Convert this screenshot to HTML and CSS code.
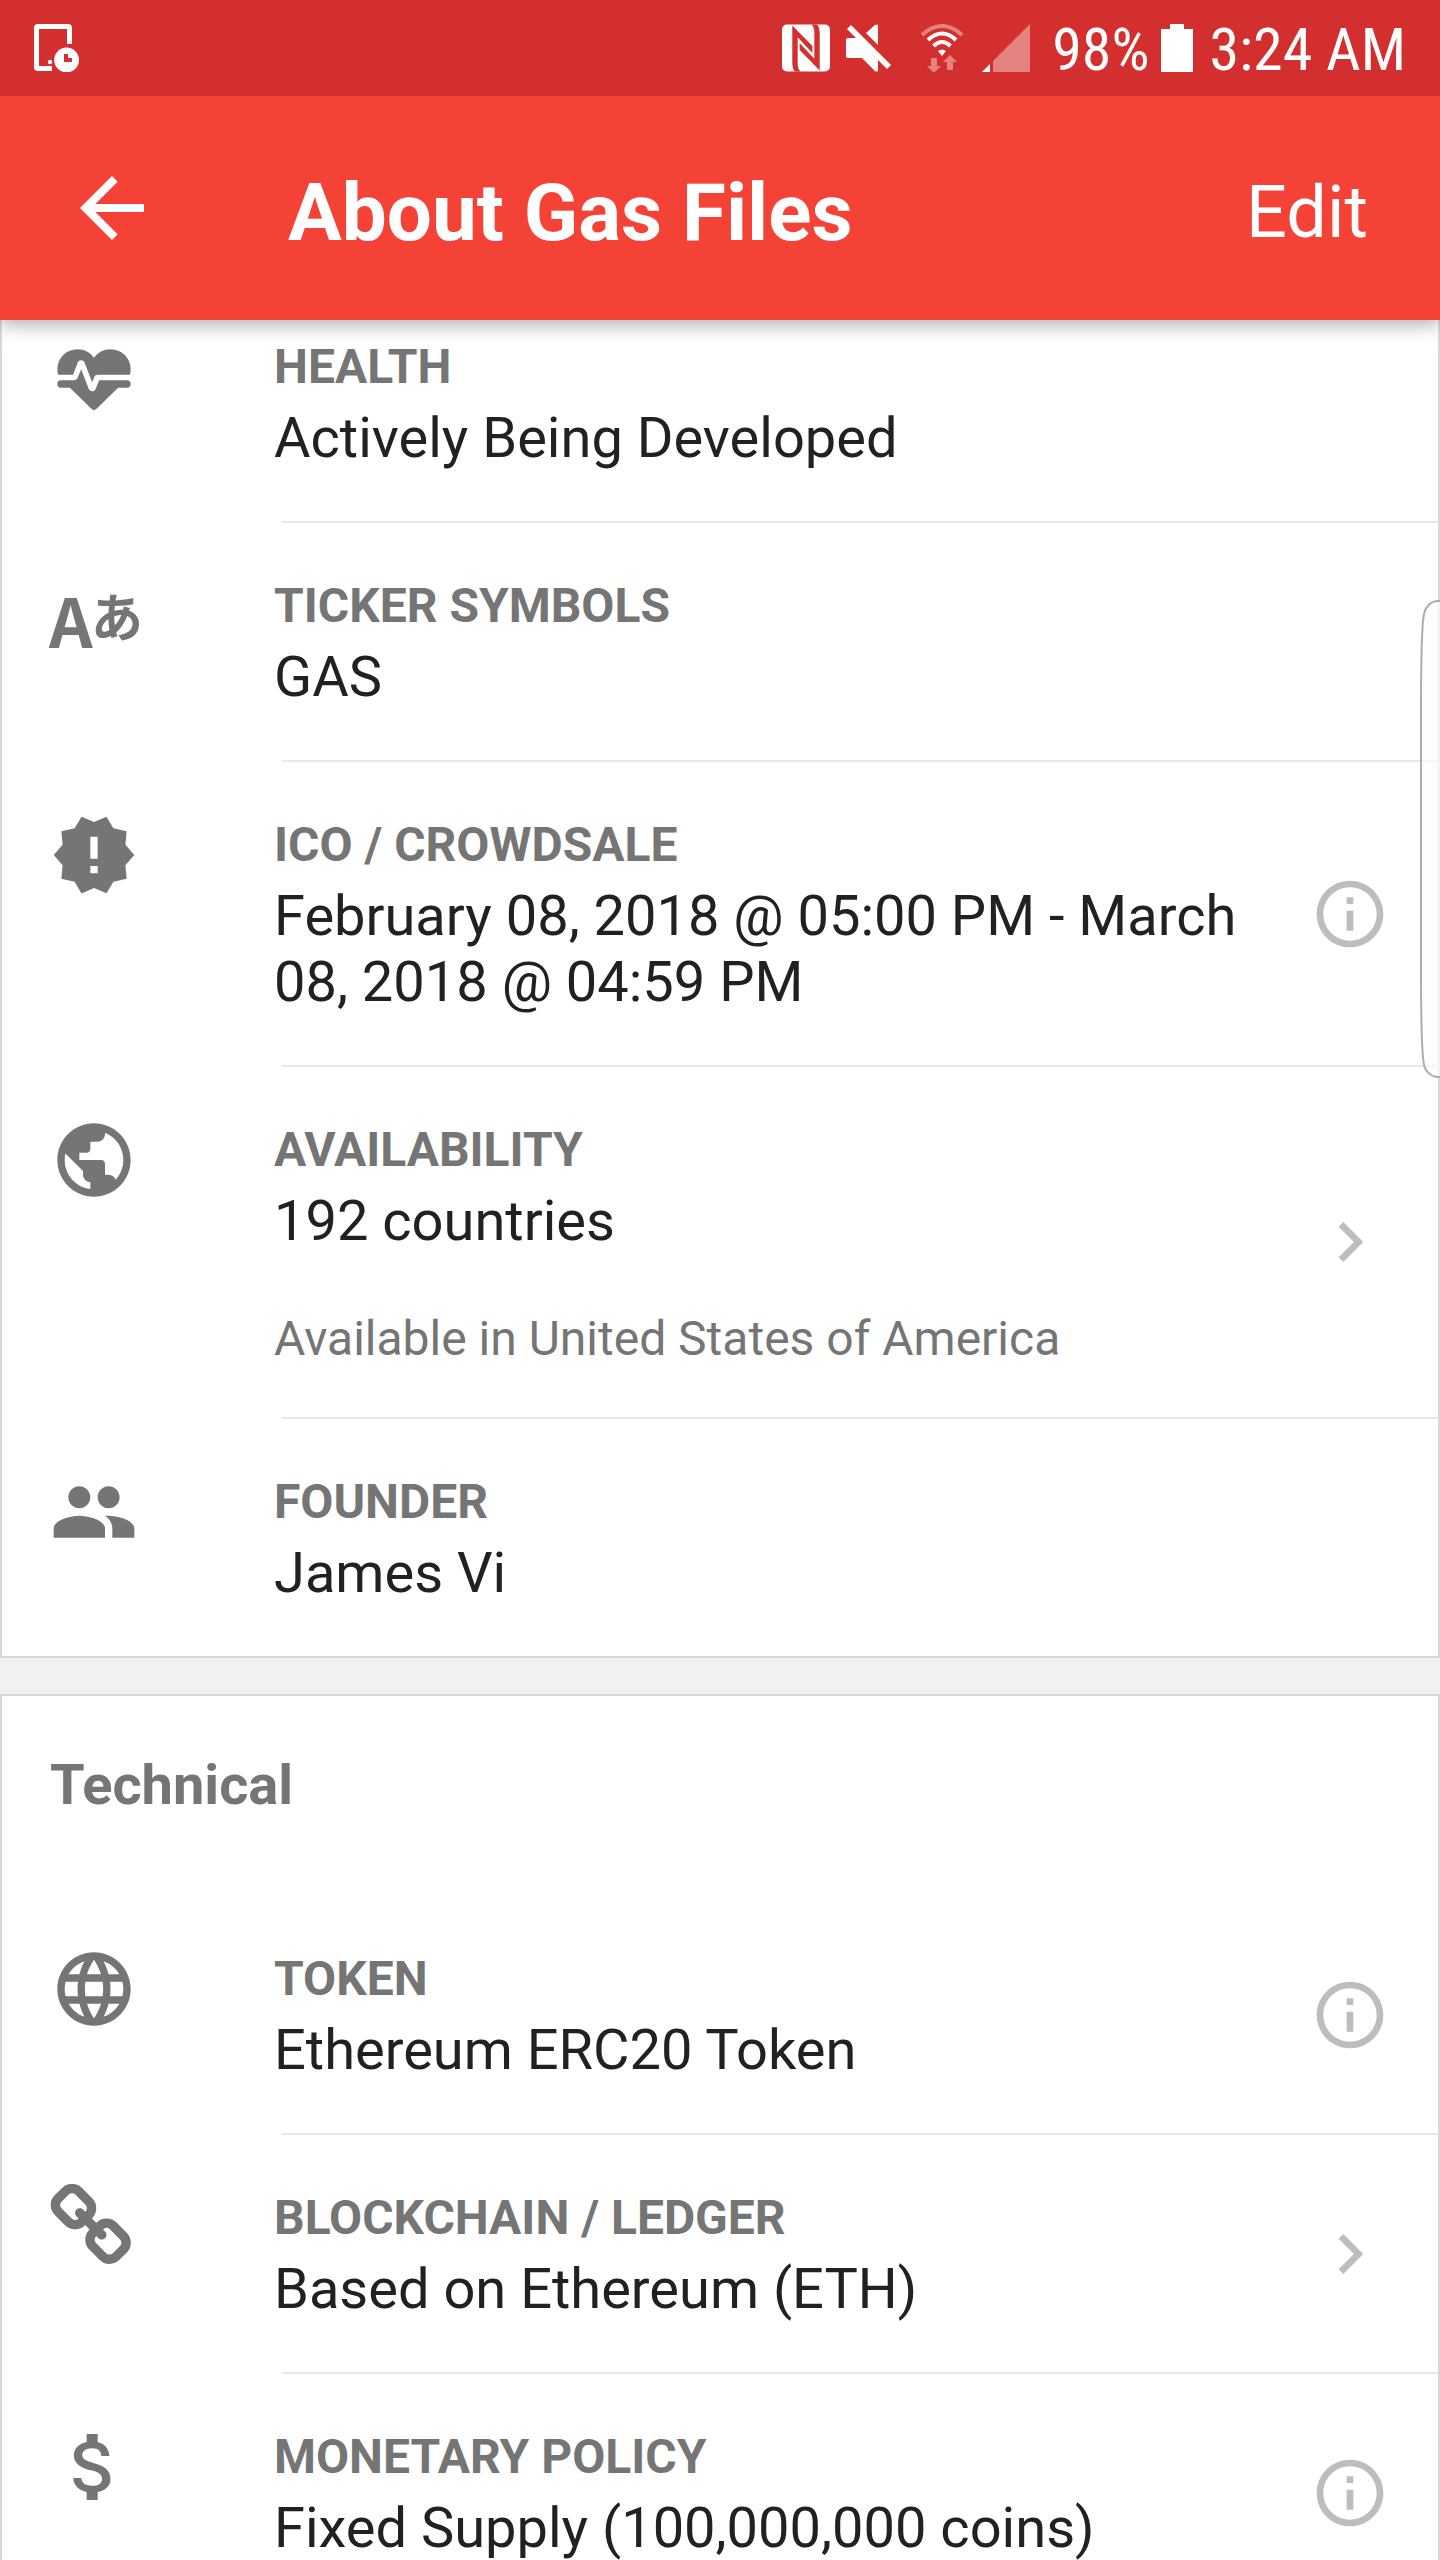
FILE: index.html
```html
<!DOCTYPE html>
<html lang="en">
<head>
<meta charset="utf-8">
<meta name="viewport" content="width=device-width, initial-scale=1">
<title>About Gas Files</title>
<link rel="stylesheet" href="styles.css">
</head>
<body>
<div class="status-bar">
  <svg class="status-icon" viewBox="0 0 48 48" aria-hidden="true">
    <path d="M20 44.500H6a1.500 1.500 0 0 1-1.500-1.500V4A1.500 1.500 0 0 1 6 2.500h30A1.500 1.500 0 0 1 37.500 4v16" fill="none" stroke="#fff" stroke-width="5"/>
    <circle cx="18" cy="38" r="2.200" fill="#fff"/>
    <circle cx="34.600" cy="36" r="12.400" fill="#fff"/>
    <path d="M34 30v6h6" fill="none" stroke="#d32f2f" stroke-width="4"/>
  </svg>
  <div class="status-right">
    <svg class="status-icon" viewBox="0 0 49 48" aria-hidden="true">
      <rect width="49" height="48" rx="5" fill="#fff"/>
      <path d="M10.500 1L31 22V29L16 13V40Q16 46 19 48H13Q10.500 45 10.500 38Z" fill="#d32f2f"/>
      <path d="M38.500 47L18 26V19L33 35V8Q33 2 30 0H36Q38.500 3 38.500 10Z" fill="#d32f2f"/>
    </svg>
    <svg class="status-icon" viewBox="0 0 48 48" aria-hidden="true">
      <g fill="#fff">
        <path d="M5 1l40 40-4 4L1 5z"/>
        <path d="M32 1v20L20 9 29 1q2-1 3 0z"/>
        <path d="M2 14h9l21 22v11q-2 1-3 0L16 34H2q-2 0-2-2V16q0-2 2-2z"/>
      </g>
    </svg>
    <svg class="status-icon status-icon--wifi" viewBox="0 0 48 48" aria-hidden="true">
      <g fill="none" stroke="#fff" stroke-width="4">
        <path d="M4 11q20-18 40 0" opacity=".4"/>
        <path d="M10 16q14-13 28 0"/>
        <path d="M15.500 22q8.500-8 17 0"/>
      </g>
      <path d="M20 27q4-3 8 0l-4 5z" fill="#fff"/>
      <path d="M13 34h6v8h4l-7 7-7-7h4zM29 46h6v-8h4l-7-7-7 7h4z" fill="#fff" opacity=".4"/>
    </svg>
    <svg class="status-icon status-icon--signal" viewBox="0 0 48 48" aria-hidden="true">
      <path d="M48 0v48H11V37z" fill="#fff" opacity=".4"/>
      <path d="M8 40v8H0z" fill="#fff"/>
    </svg>
    <span class="status-text status-text--charge">98%</span>
    <svg class="battery" viewBox="0 0 32 48" aria-hidden="true"><path d="M9 0h14v5h9v43H0V5h9z" fill="#fff"/></svg>
    <span class="status-text">3:24 AM</span>
  </div>
</div>

<header class="app-bar">
  <button class="back" type="button" aria-label="Back">
    <svg viewBox="0 0 24 24" aria-hidden="true"><path d="M20 11H7.830l5.590-5.590L12 4l-8 8 8 8 1.410-1.410L7.830 13H20v-2z"/></svg>
  </button>
  <h1 class="app-title">About Gas Files</h1>
  <button class="edit" type="button">Edit</button>
</header>

<main class="content">
  <section class="card card--first">
    <div class="row">
      <svg class="icon" viewBox="0 -0.4 24 24" aria-hidden="true"><path d="M7.500,4A5.500,5.500 0 0,0 2,9.500C2,10 2.090,10.500 2.220,11H6.300L7.570,7.630C7.870,6.830 9.050,6.750 9.430,7.630L11.500,13L12.090,11.580C12.220,11.250 12.570,11 13,11H21.780C21.910,10.500 22,10 22,9.500A5.500,5.500 0 0,0 16.500,4C14.640,4 13,4.930 12,6.340C11,4.930 9.360,4 7.500,4V4M3,12.500A1,1 0 0,0 2,13.500A1,1 0 0,0 3,14.500H5.440L11,20C12,20.900 12,20.900 13,20L18.560,14.500H21A1,1 0 0,0 22,13.500A1,1 0 0,0 21,12.500H13.400L12.470,14.800C12.070,15.810 10.920,15.670 10.550,14.830L8.500,9.500L7.540,11.830C7.390,12.210 7.050,12.500 6.600,12.500H3Z"/></svg>
      <div class="text">
        <h2 class="label">HEALTH</h2>
        <p class="value">Actively Being Developed</p>
      </div>
    </div>
    <hr class="divider">
    <div class="row">
      <svg class="icon icon--letters" viewBox="0 0 88 88" aria-hidden="true"><text x="-1" y="76" font-size="68">A</text><text x="41" y="65" font-size="52">あ</text></svg>
      <div class="text">
        <h2 class="label">TICKER SYMBOLS</h2>
        <p class="value">GAS</p>
      </div>
    </div>
    <hr class="divider">
    <div class="row">
      <svg class="icon" viewBox="0 0 24 24" aria-hidden="true"><path d="M23 12l-2.440-2.780.340-3.680-3.610-.820-1.890-3.180L12 3 8.600 1.540 6.710 4.720l-3.610.810.340 3.680L1 12l2.440 2.780-.340 3.690 3.610.820 1.890 3.180L12 21l3.400 1.460 1.890-3.180 3.610-.820-.340-3.680L23 12zm-10 5h-2v-2h2v2zm0-4h-2V7h2v6z"/></svg>
      <div class="text">
        <h2 class="label">ICO / CROWDSALE</h2>
        <p class="value">February 08, 2018 @ 05:00 PM - March 08, 2018 @ 04:59 PM</p>
      </div>
      <button class="action" type="button" aria-label="Crowdsale info"><svg viewBox="0 0 24 24" aria-hidden="true"><path d="M11 17h2v-6h-2v6zm1-15C6.480 2 2 6.480 2 12s4.480 10 10 10 10-4.480 10-10S17.520 2 12 2zm0 18c-4.410 0-8-3.590-8-8s3.590-8 8-8 8 3.590 8 8-3.590 8-8 8zM11 9h2V7h-2v2z"/></svg></button>
    </div>
    <hr class="divider">
    <a class="row" href="#availability">
      <svg class="icon" viewBox="0 0 24 24" aria-hidden="true"><path d="M12 2C6.480 2 2 6.480 2 12s4.480 10 10 10 10-4.480 10-10S17.520 2 12 2zm-1 17.930c-3.950-.490-7-3.850-7-7.930 0-.620.080-1.210.210-1.790L9 15v1c0 1.100.900 2 2 2v1.930zm6.900-2.540c-.260-.810-1-1.390-1.900-1.390h-1v-3c0-.550-.450-1-1-1H8v-2h2c.550 0 1-.450 1-1V7h2c1.100 0 2-.900 2-2v-.410c2.930 1.190 5 4.060 5 7.410 0 2.080-.800 3.970-2.100 5.390z"/></svg>
      <div class="text">
        <h2 class="label">AVAILABILITY</h2>
        <p class="value">192 countries</p>
        <p class="note">Available in United States of America</p>
      </div>
      <svg class="action" viewBox="0 0 24 24" aria-hidden="true"><path d="M10 6L8.590 7.410 13.170 12l-4.580 4.590L10 18l6-6z"/></svg>
    </a>
    <hr class="divider">
    <div class="row">
      <svg class="icon" viewBox="0 0 24 24" aria-hidden="true"><path d="M16 11c1.660 0 2.990-1.340 2.990-3S17.660 5 16 5c-1.660 0-3 1.340-3 3s1.340 3 3 3zm-8 0c1.660 0 2.990-1.340 2.990-3S9.660 5 8 5C6.340 5 5 6.340 5 8s1.340 3 3 3zm0 2c-2.330 0-7 1.170-7 3.500V19h14v-2.500c0-2.330-4.670-3.500-7-3.500zm8 0c-.290 0-.620.020-.970.050 1.160.840 1.970 1.970 1.970 3.450V19h6v-2.500c0-2.330-4.670-3.500-7-3.500z"/></svg>
      <div class="text">
        <h2 class="label">FOUNDER</h2>
        <p class="value">James Vi</p>
      </div>
    </div>
  </section>

  <section class="card">
    <h2 class="card-title">Technical</h2>
    <div class="row">
      <svg class="icon" viewBox="0 0 24 24" aria-hidden="true"><path d="M11.990 2C6.470 2 2 6.480 2 12s4.470 10 9.990 10C17.520 22 22 17.520 22 12S17.520 2 11.990 2zm6.930 6h-2.950c-.320-1.250-.780-2.450-1.380-3.560 1.840.630 3.370 1.910 4.330 3.560zM12 4.040c.830 1.200 1.480 2.530 1.910 3.960h-3.820c.430-1.430 1.080-2.760 1.910-3.960zM4.260 14C4.100 13.360 4 12.690 4 12s.100-1.360.260-2h3.380c-.080.660-.140 1.320-.140 2 0 .680.060 1.340.140 2H4.260zm.820 2h2.950c.320 1.250.780 2.450 1.380 3.560-1.840-.630-3.370-1.900-4.330-3.560zm2.950-8H5.080c.960-1.660 2.490-2.930 4.330-3.560C8.810 5.550 8.350 6.750 8.030 8zM12 19.960c-.830-1.200-1.480-2.530-1.910-3.960h3.820c-.430 1.430-1.080 2.760-1.910 3.960zM14.340 14H9.660c-.090-.660-.160-1.320-.160-2 0-.680.070-1.350.160-2h4.680c.090.650.160 1.320.160 2 0 .680-.070 1.340-.160 2zm.250 5.560c.600-1.110 1.060-2.310 1.380-3.560h2.950c-.960 1.650-2.490 2.930-4.330 3.560zM16.360 14c.080-.660.140-1.320.140-2 0-.680-.060-1.340-.140-2h3.380c.160.640.260 1.310.260 2s-.100 1.360-.260 2h-3.380z"/></svg>
      <div class="text">
        <h2 class="label">TOKEN</h2>
        <p class="value">Ethereum ERC20 Token</p>
      </div>
      <button class="action" type="button" aria-label="Token info"><svg viewBox="0 0 24 24" aria-hidden="true"><path d="M11 17h2v-6h-2v6zm1-15C6.480 2 2 6.480 2 12s4.480 10 10 10 10-4.480 10-10S17.520 2 12 2zm0 18c-4.410 0-8-3.590-8-8s3.590-8 8-8 8 3.590 8 8-3.590 8-8 8zM11 9h2V7h-2v2z"/></svg></button>
    </div>
    <hr class="divider">
    <a class="row" href="#blockchain">
      <svg class="icon" viewBox="66 20 1792 1792" aria-hidden="true"><path d="M1520 1216q0-40-28-68l-208-208q-28-28-68-28-42 0-72 32 3 3 19 18.500t21.500 21.500 15 19 13 25.500 3.500 27.500q0 40-28 68t-68 28q-15 0-27.500-3.500t-25.500-13-19-15-21.500-21.500-18.500-19q-33 31-33 73 0 40 28 68l206 207q27 27 68 27 40 0 68-26l147-146q28-28 28-67zm-703-705q0-40-28-68l-206-207q-28-28-68-28-39 0-68 27l-147 146q-28 28-28 67 0 40 28 68l208 208q27 27 68 27 42 0 72-31-3-3-19-18.500t-21.500-21.500-15-19-13-25.500-3.500-27.500q0-40 28-68t68-28q15 0 27.500 3.500t25.500 13 19 15 21.500 21.500 18.500 19q33-31 33-73zm895 705q0 120-85 203l-147 146q-83 83-203 83-121 0-204-85l-206-207q-83-83-83-203 0-123 88-209l-88-88q-86 88-208 88-120 0-204-84l-208-208q-84-84-84-204t85-203l147-146q83-83 203-83 121 0 204 85l206 207q83 83 83 203 0 123-88 209l88 88q86-88 208-88 120 0 204 84l208 208q84 84 84 204z"/></svg>
      <div class="text">
        <h2 class="label">BLOCKCHAIN / LEDGER</h2>
        <p class="value">Based on Ethereum (ETH)</p>
      </div>
      <svg class="action" viewBox="0 0 24 24" aria-hidden="true"><path d="M10 6L8.590 7.410 13.170 12l-4.580 4.590L10 18l6-6z"/></svg>
    </a>
    <hr class="divider">
    <div class="row">
      <svg class="icon" viewBox="0 0 24 24" aria-hidden="true"><path d="M11.800 10.900c-2.270-.590-3-1.200-3-2.150 0-1.090 1.010-1.850 2.700-1.850 1.780 0 2.440.850 2.500 2.100h2.210c-.070-1.720-1.120-3.300-3.210-3.810V3h-3v2.160c-1.940.420-3.500 1.680-3.500 3.610 0 2.310 1.910 3.460 4.700 4.130 2.500.600 3 1.480 3 2.410 0 .690-.490 1.790-2.700 1.790-2.060 0-2.870-.920-2.980-2.100h-2.200c.120 2.190 1.760 3.420 3.680 3.830V21h3v-2.150c1.950-.370 3.500-1.500 3.500-3.550 0-2.840-2.430-3.810-4.700-4.400z"/></svg>
      <div class="text">
        <h2 class="label">MONETARY POLICY</h2>
        <p class="value">Fixed Supply (100,000,000 coins)</p>
      </div>
      <button class="action" type="button" aria-label="Monetary policy info"><svg viewBox="0 0 24 24" aria-hidden="true"><path d="M11 17h2v-6h-2v6zm1-15C6.480 2 2 6.480 2 12s4.480 10 10 10 10-4.480 10-10S17.520 2 12 2zm0 18c-4.410 0-8-3.590-8-8s3.590-8 8-8 8 3.590 8 8-3.590 8-8 8zM11 9h2V7h-2v2z"/></svg></button>
    </div>
  </section>
</main>

<svg class="edge-handle" viewBox="0 0 20 480" aria-hidden="true">
  <path d="M22 1H18C10 1 5 8 4 14C1 28 1 70 1 110V370C1 410 1 450 4 465C5 470 10 477 18 477H22"/>
</svg>
</body>
</html>
```
FILE: styles.css
```css
* {
  box-sizing: border-box;
}

body {
  margin: 0;
  height: 100vh;
  display: flex;
  flex-direction: column;
  overflow: hidden;
  background: #f1f1f1;
  color: #212121;
  font-family: Roboto, sans-serif;
}

h1,
h2,
p {
  margin: 0;
}

button {
  padding: 0;
  border: 0;
  background: none;
  color: inherit;
  font: inherit;
}

svg {
  display: block;
}

/* Status bar */
.status-bar {
  flex: none;
  position: relative;
  z-index: 2;
  display: flex;
  align-items: center;
  justify-content: space-between;
  height: 96px;
  padding: 0 34px 0 32px;
  background: #d32f2f;
  color: #fff;
}

.status-right {
  display: flex;
  align-items: center;
  gap: 16px;
}

.status-text {
  padding-top: 4px;
  font-family: "Roboto Condensed", Roboto, sans-serif;
  font-size: 60px;
  line-height: 70px;
}

.status-text--charge {
  margin: 0 -4px 0 6px;
}

.status-icon {
  width: 48px;
  height: 48px;
}

.status-icon--wifi {
  margin-left: 8px;
}

.battery {
  width: 32px;
  height: 48px;
}

/* App bar */
.app-bar {
  flex: none;
  position: relative;
  z-index: 1;
  display: flex;
  align-items: center;
  height: 224px;
  padding: 0 72px 0 64px;
  background: #f44336;
  color: #fff;
  box-shadow: 0 4px 18px rgba(0, 0, 0, 0.35);
}

.back {
  width: 96px;
  height: 96px;
}

.back svg {
  width: 96px;
  height: 96px;
  fill: #fff;
}

.app-title {
  flex: 1;
  padding: 10px 0 0 128px;
  font-size: 80px;
  font-weight: 700;
  line-height: 94px;
}

.edit {
  padding-top: 10px;
  font-size: 72px;
  line-height: 84px;
}

/* Scrolling cards */
.content {
  flex: 1;
  min-height: 0;
  display: flex;
  flex-direction: column;
  gap: 36px;
  overflow-y: auto;
  scrollbar-width: none;
}

.card {
  flex: none;
  border: 2px solid #d9d9d9;
  background: #fff;
}

.card--first {
  margin-top: -38px;
}

.card-title {
  padding: 56px 48px 78px;
  color: #757575;
  font-size: 56px;
  font-weight: 700;
  line-height: 66px;
}

.row {
  display: flex;
  align-items: center;
  padding: 0 48px;
  color: inherit;
  text-decoration: none;
}

.icon {
  flex: none;
  align-self: flex-start;
  width: 88px;
  height: 88px;
  margin-top: 49px;
  fill: #757575;
}

.icon--letters {
  overflow: visible;
  font-family: "Noto Sans CJK JP", sans-serif;
  font-weight: 700;
}

.text {
  flex: 1;
  padding: 55px 40px 50px 136px;
}

.label {
  color: #757575;
  font-size: 48px;
  font-weight: 700;
  line-height: 56px;
}

.value {
  margin-top: 10px;
  font-size: 56px;
  line-height: 66px;
}

.note {
  margin-top: 57px;
  color: #757575;
  font-size: 48px;
  line-height: 56px;
}

.action,
.action svg {
  flex: none;
  width: 80px;
  height: 80px;
  fill: #bdbdbd;
}

.divider {
  height: 2px;
  margin: 0 0 0 280px;
  border: 0;
  background: #e8e8e8;
}

/* Edge panel handle */
.edge-handle {
  position: absolute;
  top: 600px;
  right: 0;
  z-index: 2;
  width: 20px;
  height: 480px;
  fill: rgba(252, 252, 252, 0.7);
  stroke: #adadad;
  stroke-width: 2;
}
```
